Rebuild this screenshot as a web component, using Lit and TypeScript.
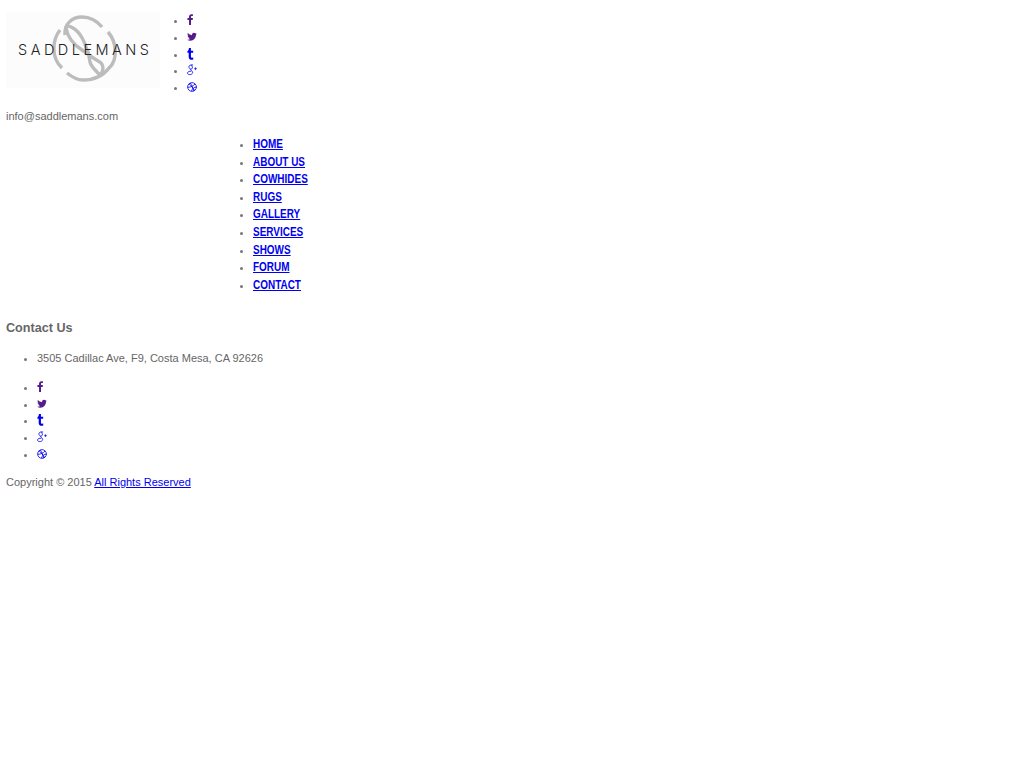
import { LitElement, html, css, svg } from "lit";
import { customElement } from "lit/decorators.js";

const icons = [
  { n: "f", vb: "0 0 8 14", w: 6.3, h: 11, top: 2, vis: true, p: svg`<path d="M2.600 14V7.600H.6V5.200h2V3.400C2.600 1.300 3.800.2 5.700.2c.9 0 1.500.1 1.800.1v2.200H6.300c-1 0-1.200.5-1.200 1.200v1.500h2.400l-.3 2.400H5.100V14z"/>` },
  { n: "tw", vb: "0 1 11 10", w: 10, h: 9, top: 3, vis: true, p: svg`<path d="M10.800 2.900c-.4.2-.8.3-1.200.3.4-.3.8-.7.9-1.200-.4.2-.9.4-1.300.5a2.200 2.200 0 0 0-3.700 2C3.700 4.400 2 3.500.9 2.200c-.6 1-.3 2.300.7 3-.3 0-.7-.1-1-.3 0 1.100.7 2 1.800 2.300-.3.1-.7.1-1 0 .3.9 1.100 1.500 2.100 1.500-.9.7-2.100 1.100-3.300.9 1 .7 2.200 1 3.400 1 4.100 0 6.500-3.500 6.300-6.600.4-.3.8-.7 1-1.100z"/>` },
  { n: "t", vb: "0 0 8 14", w: 7, h: 12, top: 2, vis: false, p: svg`<path d="M2.200 0h2.300v3.200h2.600v2.300H4.500v4.300c0 1.200.9 1.700 2.700 1.300v2.300c-3.200.9-5.300-.2-5.300-3V5.500H.4V3.800C1.500 3.300 2 2 2.200 0z"/>` },
  { n: "g", vb: "0 0.5 11 12.500", w: 10, h: 12, top: 2, vis: false, p: svg`<path fill="none" stroke="currentColor" stroke-width=".9" d="M4.500 1.200C2.800 1.200 1.900 2.500 2.200 3.900c.3 1.300 1.500 2.100 2.600 1.800 1.300-.4 1.400-2 .8-3.100C5.200 1.800 4.900 1.500 4.500 1.200h2.200M4 5.800c-.4.5 0 1 .8 1.600 1.100.8 1.500 1.300 1.400 2.200-.1 1.600-2 2.400-3.700 2.200C.9 11.600.3 10.500.7 9.500c.5-1 2-1.500 3.900-1.400"/><path fill="none" stroke="currentColor" stroke-width=".8" d="M7.800 5.300h3M9.300 3.800v3"/>` },
  { n: "d", vb: "0 1.500 11 11", w: 10, h: 10, top: 3, vis: false, p: svg`<g fill="none" stroke="currentColor" stroke-width=".9"><circle cx="5.500" cy="7" r="4.800"/><path d="M2.200 3.500c2 2 5 5.200 6.200 7.300M8.900 3.600C7.200 5.800 4 7.500.8 7.300M3.600 2.600c1.700 2.500 3.300 6 3.700 8.900M5 11.500c.6-2.600 2.700-4.700 5.800-4.400"/></g>` },
];

@customElement("app-root")
export class AppRoot extends LitElement {
  static styles = css`
    :host {
      display: block;
      padding: 12px 6px 0;
      font-family: "Liberation Sans", Arial, sans-serif;
      font-size: 12px;
      line-height: 16.800px;
      color: #666;
    }
    ul { margin: 0; }
    li::marker { color: #777; font-size: 11.500px; }
    .head { display: flex; align-items: flex-start; }
    .logo { display: block; width: 154px; height: 76px; }
    .social { padding-left: 27px; }
    .social li { height: 16.800px; }
    .social a { display: inline-block; height: 16.800px; vertical-align: top; }
    .social svg { display: block; fill: currentColor; }
    .vis { color: #551a8b; }
    .unv { color: #0000ee; }
    .mail { margin: 12px 0 0; font-size: 11px; }
    .menu {
      margin: 11.300px 0 0 0;
      padding-left: 247px;
      line-height: 17.600px;
    }
    .menu a {
      display: inline-block;
      font-size: 12px;
      font-weight: 700;
      color: #0000ee;
      transform: scaleX(0.83);
      transform-origin: left center;
    }
    h3 {
      margin: 25px 0 0;
      font-size: 12.600px;
      line-height: 19.600px;
      font-weight: 700;
      color: #666;
    }
    .addr { margin-top: 11px; padding-left: 31px; }
    .addr span { font-size: 11px; }
    .social2 { margin-top: 12px; padding-left: 31px; }
    .copy { margin: 11px 0 0; font-size: 11px; }
    .copy a { color: #0000ee; }
  `;

  private social(cls: string) {
    return html`<ul class="social ${cls}">
      ${icons.map(
        (i) => html`<li>
          <a href="#" class=${i.vis ? "vis" : "unv"} aria-label=${i.n}>
            <svg viewBox=${i.vb} style="width:${i.w}px;height:${i.h}px;margin-top:${i.top}px">${i.p}</svg>
          </a>
        </li>`
      )}
    </ul>`;
  }

  render() {
    const menu = ["HOME", "ABOUT US", "COWHIDES", "RUGS", "GALLERY", "SERVICES", "SHOWS", "FORUM", "CONTACT"];
    return html`
      <div class="head">
        <svg class="logo" viewBox="0 0 154 76">
          <rect width="154" height="76" fill="#fcfcfc"></rect>
          <g fill="none" stroke="#bcbcbc" stroke-width="3.400" stroke-linejoin="round">
            <path d="M59 23C58 12 66 5 76 5C84 5 91 9 96 15"></path>
            <path d="M54 18C46 28 45 46 56 56"></path>
            <path d="M102 20C111 30 112 48 103 56C97 64 87 68 77 68C71 68 66 65 61 61"></path>
            <path d="M60 16C62 27 68 33 76 38C82 42 88 47 92 49C97 51 98 56 96 60C95 63 92 62 91 60C87 56 85 54 84 50C83 45 83 41 81 38C79 30 74 20 67 16C64 14 60 13 60 16Z"></path>
          </g>
          <text x="12" y="43" textLength="131" font-family="Inter, Lato, 'Liberation Sans', sans-serif" font-weight="300" font-size="14.500" fill="#222">SADDLEMANS</text>
        </svg>
        ${this.social("")}
      </div>
      <p class="mail">info@saddlemans.com</p>
      <ul class="menu">
        ${menu.map((m) => html`<li><a href="#">${m}</a></li>`)}
      </ul>
      <h3>Contact Us</h3>
      <ul class="addr"><li><span>3505 Cadillac Ave, F9, Costa Mesa, CA 92626</span></li></ul>
      ${this.social("social2")}
      <p class="copy">Copyright © 2015 <a href="#">All Rights Reserved</a></p>
    `;
  }
}
